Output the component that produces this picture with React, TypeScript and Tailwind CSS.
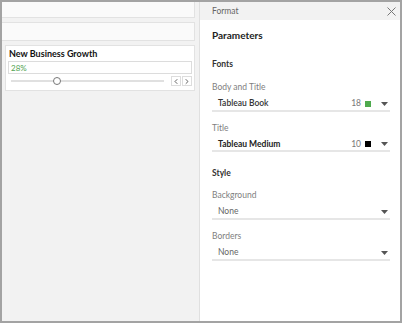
import { ChevronLeft, ChevronRight } from "lucide-react";

function Caret() {
  return (
    <svg width="7" height="4" viewBox="0 0 7 4" className="ml-[10px]">
      <path d="M0 0h7L3.5 4z" fill="#555" />
    </svg>
  );
}

function SelectRow({ label, weight, size, swatch }: { label: string; weight?: string; size?: string; swatch?: string }) {
  return (
    <div className="flex items-center h-[18px] pt-[4px] border-b-2 border-[#e6e6e6] pl-[6px] pr-[2px] mr-[10px]">
      <span className={`flex-1 text-[8.5px] ${weight ?? "text-[#666]"}`}>{label}</span>
      {size && <span className="text-[8.5px] text-[#777] mr-[4px]">{size}</span>}
      {swatch && <span className={`w-[6px] h-[6px] ${swatch}`} />}
      <Caret />
    </div>
  );
}

export default function App() {
  return (
    <div className="w-[402px] h-[323px] border-2 border-[#a3a3a3] flex bg-white font-['Lato',sans-serif] overflow-hidden">
      <div className="w-[198px] bg-[#f2f2f2] border-r border-[#e0e0e0] flex flex-col pr-[4px]">
        <div className="h-[16px] bg-[#fafafa] border-b border-r border-[#e2e2e2]" />
        <div className="h-[19px] bg-[#fafafa] border-y border-r border-[#e2e2e2] mt-[4px]" />
        <div className="bg-white border border-[#e2e2e2] ml-[3px] mt-[4px] h-[46px] px-[2px] pt-[1px]">
          <div className="text-[9px] font-bold text-[#111] pl-[1px] leading-[14px]">New Business Growth</div>
          <div className="h-[13px] border border-[#dcdcdc] flex items-center pl-[2px] text-[8px] text-[#4fa34f]">28%</div>
          <div className="flex items-center mt-[2px]">
            <div className="relative flex-1 ml-[3px] mr-[7px] h-[2px] bg-[#e0e0e0]">
              <div className="absolute left-[42px] -top-[3px] w-[8px] h-[8px] rounded-full bg-white border border-[#777]" />
            </div>
            <div className="w-[10px] h-[10px] border border-[#ddd] flex items-center justify-center">
              <ChevronLeft size={9} strokeWidth={2.5} color="#444" />
            </div>
            <div className="w-[10px] h-[10px] border border-[#ddd] flex items-center justify-center ml-px">
              <ChevronRight size={9} strokeWidth={2.5} color="#444" />
            </div>
          </div>
        </div>
      </div>
      <div className="flex-1 flex flex-col">
        <div className="h-[18px] bg-[#f2f2f2] flex items-center pl-[12px] pr-[4px]">
          <span className="flex-1 text-[8.5px] text-[#666]">Format</span>
          <svg width="9" height="9" viewBox="0 0 9 9">
            <path d="M0.5 0.5L8.5 8.5M8.5 0.5L0.5 8.5" stroke="#777" strokeWidth="1" />
          </svg>
        </div>
        <div className="pl-[12px] flex flex-col">
          <div className="mt-[8px] text-[10px] font-bold text-[#222]">Parameters</div>
          <div className="mt-[15px] text-[8.5px] font-bold text-[#333]">Fonts</div>
          <div className="mt-[10px] text-[8.5px] text-[#808080]">Body and Title</div>
          <SelectRow label="Tableau Book" weight="font-semibold text-[#333]" size="18" swatch="bg-[#4eaa4e]" />
          <div className="mt-[10px] text-[8.5px] text-[#808080]">Title</div>
          <SelectRow label="Tableau Medium" weight="font-bold text-[#222]" size="10" swatch="bg-black" />
          <div className="mt-[15px] text-[8.5px] font-bold text-[#333]">Style</div>
          <div className="mt-[9px] text-[8.5px] text-[#808080]">Background</div>
          <SelectRow label="None" />
          <div className="mt-[10px] text-[8.5px] text-[#808080]">Borders</div>
          <SelectRow label="None" />
        </div>
      </div>
    </div>
  );
}
